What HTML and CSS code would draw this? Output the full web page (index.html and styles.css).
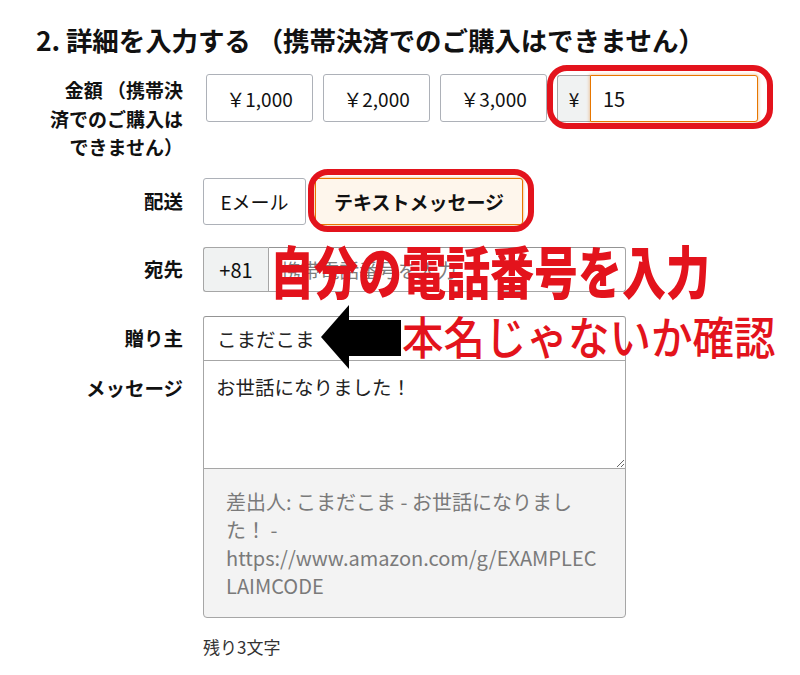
FILE: index.html
```html
<!DOCTYPE html>
<html lang="ja">
<head>
<meta charset="utf-8">
<title>詳細を入力する</title>
<link rel="stylesheet" href="styles.css">
</head>
<body>
<div class="page">
  <h2 class="title">2. 詳細を入力する （携帯決済でのご購入はできません）</h2>

  <div class="row row-amount">
    <div class="label label-multi">金額 （携帯決<br>済でのご購入は<br>できません）</div>
    <div class="field amounts">
      <button class="btn amount-btn">￥1,000</button>
      <button class="btn amount-btn">￥2,000</button>
      <button class="btn amount-btn">￥3,000</button>
      <div class="amount-group ring ring-amount">
        <span class="addon addon-yen">¥</span>
        <input class="amount-input" type="text" value="15">
      </div>
    </div>
  </div>

  <div class="row row-delivery">
    <div class="label">配送</div>
    <div class="field delivery">
      <button class="btn del-btn">Eメール</button>
      <button class="btn del-btn selected ring ring-sel">テキストメッセージ</button>
    </div>
  </div>

  <div class="row row-to">
    <div class="label">宛先</div>
    <div class="field phone-group">
      <span class="addon addon-phone">+81</span>
      <input class="phone-input" type="text" placeholder="携帯電話番号を入力">
    </div>
  </div>

  <div class="row row-from">
    <div class="label">贈り主</div>
    <div class="field">
      <input class="from-input" type="text" value="こまだこま">
    </div>
  </div>

  <div class="row row-msg">
    <div class="label label-msg">メッセージ</div>
    <div class="field msg-field">
      <textarea class="msg-area">お世話になりました！</textarea>
      <div class="preview">差出人: こまだこま - お世話になりまし<br>た！ -<br>https://www.amazon.com/g/EXAMPLEC<br>LAIMCODE</div>
      <div class="remain">残り3文字</div>
    </div>
  </div>

  <div class="note note-phone">自分の電話番号を入力</div>
  <div class="note note-name">本名じゃないか確認</div>
  <svg class="arrow" width="84" height="66" viewBox="0 0 84 66">
    <polygon points="0,32 28,0 28,15 80,15 80,51 28,51 28,64" fill="#000"/>
  </svg>
</div>
</body>
</html>
```

FILE: styles.css
```css
* {
  box-sizing: border-box;
}

html, body {
  margin: 0;
  padding: 0;
  background: #ffffff;
}

body {
  font-family: "Noto Sans CJK JP", "Noto Sans", sans-serif;
  color: #111111;
}

.page {
  position: relative;
  width: 800px;
  height: 675px;
  overflow: hidden;
}

.title {
  margin: 0;
  padding: 22px 0 0 36px;
  font-size: 26.5px;
  line-height: 36px;
  font-weight: 700;
  color: #111111;
  letter-spacing: -0.1px;
}

.row {
  display: grid;
  grid-template-columns: 183px auto;
  column-gap: 20px;
  align-items: center;
}

.label {
  text-align: right;
  font-size: 19.5px;
  font-weight: 700;
  line-height: 28px;
  color: #111111;
}

.label-multi {
  align-self: start;
  padding-top: 2px;
  line-height: 28.5px;
  font-size: 19px;
}

.row-amount {
  margin-top: 16px;
  align-items: start;
}

.amounts {
  display: flex;
  gap: 10px;
  margin-left: 3px;
}

.btn {
  font-family: "Noto Sans CJK JP", "Noto Sans", sans-serif;
  font-size: 19px;
  color: #111111;
  background: #ffffff;
  border: 1px solid #adb1b8;
  border-radius: 3px;
  padding: 0;
  box-shadow: 0 1px 0 rgba(255, 255, 255, .6) inset;
}

.amount-btn {
  width: 107px;
  height: 48px;
}

.ring {
  position: relative;
}

.ring::after {
  content: "";
  position: absolute;
  border: 6px solid #e3131c;
  border-radius: 20px;
  pointer-events: none;
}

.ring-amount::after {
  top: -10px;
  left: -10px;
  right: -15px;
  bottom: -7px;
}

.ring-sel::after {
  top: -10px;
  left: -8px;
  right: -12px;
  bottom: -8px;
}

.amount-group {
  display: flex;
  height: 47px;
  margin-top: 1px;
}

.addon {
  display: flex;
  align-items: center;
  justify-content: center;
  background: #f0f2f2;
  border: 1px solid #a6a6a6;
  border-right: none;
  border-radius: 3px 0 0 3px;
  font-size: 19px;
  color: #111111;
}

.addon-yen {
  width: 33px;
}

.amount-input {
  width: 168px;
  height: 47px;
  border: 1px solid #e77600;
  border-radius: 0 3px 3px 0;
  box-shadow: 0 0 3px 1px rgba(228, 121, 17, .35);
  padding: 0 12px;
  font-family: "Noto Sans CJK JP", "Noto Sans", sans-serif;
  font-size: 20px;
  color: #111111;
  outline: none;
}

.row-delivery {
  margin-top: 16px;
}

.delivery {
  display: flex;
  gap: 9px;
}

.del-btn {
  height: 47px;
}

.del-btn:first-child {
  width: 103px;
}

.selected {
  width: 208px;
  font-weight: 700;
  background: #fef6ec;
  border-color: #e77600;
  box-shadow: 0 0 2px 1px rgba(228, 121, 17, .35);
}

.row-to {
  margin-top: 22px;
}

.phone-group {
  display: flex;
  height: 45px;
}

.addon-phone {
  width: 65px;
  font-size: 20px;
}

.phone-input {
  width: 358px;
  height: 45px;
  border: 1px solid #a6a6a6;
  border-top-color: #949494;
  border-radius: 0 3px 3px 0;
  padding: 0 12px;
  font-family: "Noto Sans CJK JP", "Noto Sans", sans-serif;
  font-size: 19.5px;
  outline: none;
}

.phone-input::placeholder {
  color: #7d7d7d;
}

.row-from {
  margin-top: 24px;
}

.from-input {
  display: block;
  width: 423px;
  height: 45px;
  border: 1px solid #a6a6a6;
  border-top-color: #949494;
  border-radius: 3px 3px 0 0;
  padding: 0 13px;
  font-family: "Noto Sans CJK JP", "Noto Sans", sans-serif;
  font-size: 19.5px;
  color: #222222;
  outline: none;
}

.row-msg {
  align-items: start;
}

.label-msg {
  padding-top: 13px;
}

.msg-field {
  width: 423px;
}

.msg-area {
  display: block;
  width: 423px;
  height: 109px;
  margin: -1px 0 0;
  border: 1px solid #a6a6a6;
  border-radius: 0;
  padding: 12px 12px;
  font-family: "Noto Sans CJK JP", "Noto Sans", sans-serif;
  font-size: 19.5px;
  line-height: 28px;
  color: #222222;
  outline: none;
  resize: vertical;
}

.preview {
  margin-top: -1px;
  height: 150px;
  border: 1px solid #a6a6a6;
  border-radius: 0 0 4px 4px;
  background: #f3f3f3;
  padding: 19px 18px 19px 22px;
  font-size: 20px;
  line-height: 28px;
  color: #7a7a7a;
}

.remain {
  margin-top: 16px;
  font-size: 17px;
  line-height: 26px;
  color: #333333;
}

.note {
  position: absolute;
  color: #e3131c;
  white-space: nowrap;
  transform-origin: left center;
}

.note-phone {
  left: 270px;
  top: 248px;
  font-size: 44px;
  line-height: 44px;
  font-weight: 900;
  transform: scaleY(1.28);
}

.note-name {
  left: 402px;
  top: 315px;
  font-size: 41.5px;
  line-height: 41px;
  font-weight: 500;
  transform: scaleY(1.1);
}

.arrow {
  position: absolute;
  left: 321px;
  top: 305px;
}
```
